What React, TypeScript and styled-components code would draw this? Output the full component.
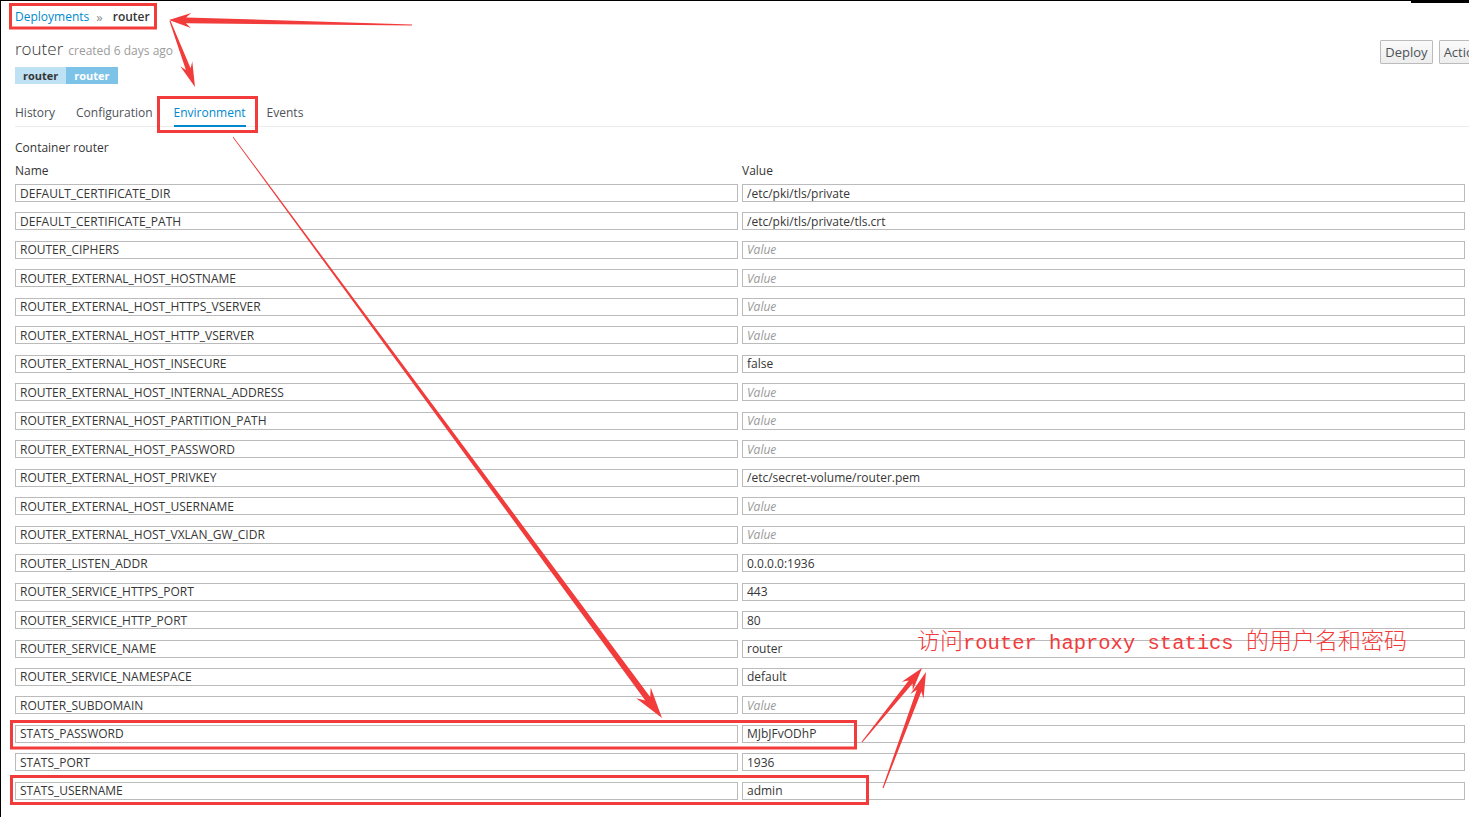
import React from "react";
import styled, { createGlobalStyle } from "styled-components";

const Global = createGlobalStyle`
  html, body { margin: 0; padding: 0; background: #fff; overflow: hidden; }
  body { font-family: "Open Sans", "Noto Sans", sans-serif; font-size: 12px; color: #363636; }
  * { box-sizing: border-box; }
`;

const Page = styled.div`
  position: relative;
  width: 1469px;
  height: 817px;
  border-top: 1px solid #000;
  border-left: 1px solid #000;
  padding: 0 4px 0 14px;
  overflow: hidden;
`;

const Header = styled.div`
  display: flex;
  justify-content: space-between;
  align-items: flex-start;
`;

const HeadLeft = styled.div`
  display: flex;
  flex-direction: column;
  align-items: flex-start;
`;

const Breadcrumb = styled.div`
  display: flex;
  align-items: center;
  gap: 7px;
  padding-top: 9px;
  line-height: 14px;
  font-size: 12px;
`;

const Crumb = styled.span<{ $active?: boolean }>`
  color: ${(p) => (p.$active ? "#363636" : "#0088ce")};
  font-weight: ${(p) => (p.$active ? 600 : 400)};
`;

const Sep = styled.span`
  color: #8b8d8f;
  font-size: 13px;
  margin-right: 3px;
`;

const Title = styled.h1`
  margin: 13px 0 0;
  font-size: 17px;
  font-weight: 300;
  line-height: 24px;
  color: #363636;
  display: flex;
  align-items: baseline;
  gap: 5px;
`;

const Small = styled.small`
  font-size: 12px;
  color: #9c9c9c;
  font-weight: 400;
`;

const Labels = styled.div`
  display: flex;
  margin-top: 4px;
`;

const Label = styled.span<{ $value?: boolean }>`
  display: inline-block;
  height: 17px;
  line-height: 17px;
  padding: 0 8px;
  font-size: 11px;
  font-weight: 700;
  background: ${(p) => (p.$value ? "#7dc3e8" : "#bee1f4")};
  color: ${(p) => (p.$value ? "#fff" : "#363636")};
`;

const Actions = styled.div`
  display: flex;
  gap: 6px;
  padding-top: 39px;
  margin-right: -28px;
`;

const Button = styled.button`
  height: 24px;
  padding: 0 4px;
  font-family: "Open Sans", sans-serif;
  font-size: 13px;
  color: #4d5258;
  border: 1px solid #bbb;
  border-radius: 1px;
  background: linear-gradient(#fafafa, #ededed);
`;

const Tabs = styled.div`
  display: flex;
  gap: 21px;
  margin-top: 17px;
  margin-right: -4px;
  border-bottom: 1px solid #ececec;
`;

const Tab = styled.div<{ $active?: boolean }>`
  line-height: 24px;
  font-size: 12px;
  color: ${(p) => (p.$active ? "#0088ce" : "#4d5258")};
  border-bottom: 2px solid ${(p) => (p.$active ? "#0088ce" : "transparent")};
  margin-bottom: -1px;
`;

const Section = styled.div`
  margin-top: 13px;
  line-height: 16px;
  font-size: 12px;
  color: #363636;
`;

const HeadRow = styled.div`
  display: grid;
  grid-template-columns: 1fr 1fr;
  column-gap: 4px;
  margin-top: 7px;
  line-height: 16px;
`;

const Grid = styled.div`
  display: grid;
  grid-template-columns: 1fr 1fr;
  column-gap: 4px;
  row-gap: 10.476px;
  grid-auto-rows: 18px;
  margin-top: 5px;
`;

const Field = styled.input`
  height: 18px;
  width: 100%;
  border: 1px solid #bbb;
  border-radius: 0;
  padding: 0 4px;
  font-family: "Open Sans", sans-serif;
  font-size: 12px;
  color: #363636;
  background: #fff;
  outline: none;
  &::placeholder {
    color: #999;
    font-style: italic;
  }
`;

const Overlay = styled.svg`
  position: absolute;
  left: -1px;
  top: -1px;
  pointer-events: none;
`;

const Note = styled.div`
  position: absolute;
  left: 916px;
  top: 623px;
  color: #f23b3b;
  white-space: nowrap;
  line-height: 30px;
`;

const Cjk = styled.span`
  font-family: "Noto Sans CJK SC", sans-serif;
  font-size: 23px;
  font-weight: 300;
`;

const Latin = styled.span`
  font-family: "Liberation Mono", monospace;
  font-size: 20.5px;
`;

const rows: [string, string][] = [
  ["DEFAULT_CERTIFICATE_DIR", "/etc/pki/tls/private"],
  ["DEFAULT_CERTIFICATE_PATH", "/etc/pki/tls/private/tls.crt"],
  ["ROUTER_CIPHERS", ""],
  ["ROUTER_EXTERNAL_HOST_HOSTNAME", ""],
  ["ROUTER_EXTERNAL_HOST_HTTPS_VSERVER", ""],
  ["ROUTER_EXTERNAL_HOST_HTTP_VSERVER", ""],
  ["ROUTER_EXTERNAL_HOST_INSECURE", "false"],
  ["ROUTER_EXTERNAL_HOST_INTERNAL_ADDRESS", ""],
  ["ROUTER_EXTERNAL_HOST_PARTITION_PATH", ""],
  ["ROUTER_EXTERNAL_HOST_PASSWORD", ""],
  ["ROUTER_EXTERNAL_HOST_PRIVKEY", "/etc/secret-volume/router.pem"],
  ["ROUTER_EXTERNAL_HOST_USERNAME", ""],
  ["ROUTER_EXTERNAL_HOST_VXLAN_GW_CIDR", ""],
  ["ROUTER_LISTEN_ADDR", "0.0.0.0:1936"],
  ["ROUTER_SERVICE_HTTPS_PORT", "443"],
  ["ROUTER_SERVICE_HTTP_PORT", "80"],
  ["ROUTER_SERVICE_NAME", "router"],
  ["ROUTER_SERVICE_NAMESPACE", "default"],
  ["ROUTER_SUBDOMAIN", ""],
  ["STATS_PASSWORD", "MJbJFvODhP"],
  ["STATS_PORT", "1936"],
  ["STATS_USERNAME", "admin"],
];

type Pt = [number, number];

function arrow(tail: Pt, tip: Pt, wt: number, ws: number, L: number, hw: number): string {
  const dx = tip[0] - tail[0];
  const dy = tip[1] - tail[1];
  const len = Math.hypot(dx, dy);
  const ux = dx / len;
  const uy = dy / len;
  const nx = -uy;
  const ny = ux;
  const bx = tip[0] - ux * L;
  const by = tip[1] - uy * L;
  const back = L * 0.3;
  const pts: Pt[] = [
    [tail[0] + (nx * wt) / 2, tail[1] + (ny * wt) / 2],
    [bx + (nx * ws) / 2, by + (ny * ws) / 2],
    [bx + nx * hw - ux * back, by + ny * hw - uy * back],
    tip,
    [bx - nx * hw - ux * back, by - ny * hw - uy * back],
    [bx - (nx * ws) / 2, by - (ny * ws) / 2],
    [tail[0] - (nx * wt) / 2, tail[1] - (ny * wt) / 2],
  ];
  return pts.map((p) => `${p[0].toFixed(1)},${p[1].toFixed(1)}`).join(" ");
}

const RED = "#f23b3b";

export default function App() {
  return (
    <>
      <Global />
      <Page>
        <Header>
          <HeadLeft>
            <Breadcrumb>
              <Crumb>Deployments</Crumb>
              <Sep>»</Sep>
              <Crumb $active>router</Crumb>
            </Breadcrumb>
            <Title>
              router <Small>created 6 days ago</Small>
            </Title>
            <Labels>
              <Label>router</Label>
              <Label $value>router</Label>
            </Labels>
          </HeadLeft>
          <Actions>
            <Button>Deploy</Button>
            <Button>Actions</Button>
          </Actions>
        </Header>
        <Tabs>
          <Tab>History</Tab>
          <Tab>Configuration</Tab>
          <Tab $active>Environment</Tab>
          <Tab>Events</Tab>
        </Tabs>
        <Section>Container router</Section>
        <HeadRow>
          <span>Name</span>
          <span>Value</span>
        </HeadRow>
        <Grid>
          {rows.map(([k, v]) => (
            <React.Fragment key={k}>
              <Field readOnly value={k} />
              <Field readOnly value={v} placeholder="Value" />
            </React.Fragment>
          ))}
        </Grid>

        <Overlay width={1469} height={817} viewBox="0 0 1469 817">
          <rect x={1411} y={0} width={58} height={3} fill="#000" />
          <g fill="none" stroke={RED} strokeWidth={3}>
            <rect x={10.5} y={4.5} width={145} height={23.5} />
            <rect x={158.5} y={97.5} width={98} height={34} />
            <rect x={11.5} y={721.5} width={844} height={26.5} />
            <rect x={11.5} y={776.5} width={856} height={27} />
          </g>
          <g fill={RED}>
            <polygon points={arrow([412, 25], [169, 20], 1, 6, 17, 7.5)} />
            <polygon points={arrow([170, 21], [195, 87], 1, 5, 19, 6.5)} />
            <polygon points={arrow([233, 137], [662, 718], 0.8, 6, 24, 9)} />
            <polygon points={arrow([862, 742], [922, 668], 1, 5, 18, 7)} />
            <polygon points={arrow([883, 788], [926, 672], 1, 5, 20, 7)} />
          </g>
        </Overlay>
        <Note>
          <Cjk>访问</Cjk>
          <Latin>router haproxy statics </Latin>
          <Cjk>的用户名和密码</Cjk>
        </Note>
      </Page>
    </>
  );
}
